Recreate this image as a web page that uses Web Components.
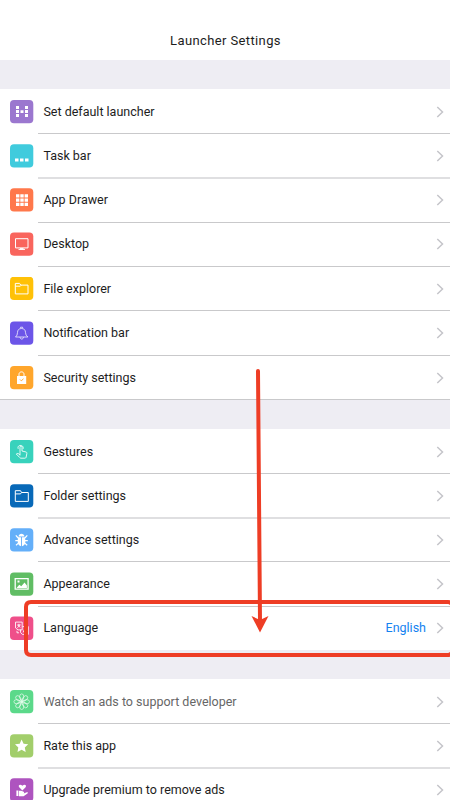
<!DOCTYPE html>
<html lang="en"><head><meta charset="utf-8"><title>Launcher Settings</title>
<style>body{margin:0;background:#fff;font-family:Roboto,sans-serif;overflow:hidden}</style></head><body>
<launcher-settings></launcher-settings>
<script>
const icons={
home:['#9b77cf','<g fill="#fff"><path d="M6 6h3v3H6zM6 10h3v3H6zM6 14h3v3H6zM15 6h3v3h-3zM15 10h3v3h-3zM15 14h3v3h-3zM10.5 10.3h3v2.6h-3z"/></g>'],
task:['#40cbdd','<path fill="#fff" d="M5 14.3h3.5v3H5zM10 14.3h3.5v3H10zM15 14.3h3.5v3H15z"/>'],
grid:['#ff784b','<path fill="#fff" d="M6 6h3.4v3.2H6zM10.3 6h3.4v3.2h-3.4zM14.6 6H18v3.2h-3.4zM6 10.2h3.4v3.2H6zM10.3 10.2h3.4v3.2h-3.4zM14.6 10.2H18v3.2h-3.4zM6 14.4h3.4v3.2H6zM10.3 14.4h3.4v3.2h-3.4zM14.6 14.4H18v3.2h-3.4z"/>'],
desk:['#f9655d','<path d="M5.5 6.3h12.5v9.2h-12.5zM8.5 17h6.5"/><path stroke-width="1.6" d="M10 16.5h3.5"/>'],
file:['#ffc107','<path d="M5.3 17.2V6.7h4.3l1.2 1.7h7.2v8.8zM5.3 9.5h5l1-1.1"/>'],
bell:['#6c55e8','<g opacity=".72"><path d="M5.5 15.5q2-1.5 2-4.5c0-2.4 1.4-4 4-4s4 1.6 4 4q0 3 2.4 4.5zM10.6 6.5v-.8h2v.8M10 15.7c.3 2.5 3.2 2.5 3.5 0"/></g>'],
lock:['#ffa62c','<path d="M9 10V8.2c0-3.1 5-3.1 5 0V10"/><path fill="#fff" stroke="none" d="M7 10h9.2v8H7z"/><path stroke="#ffa62c" d="m10 13.5 1.3 1.3 2.2-2"/>'],
hand:['#38d2bc','<path stroke-width=".85" d="M10 15.5V7.3c0-1.5 2-1.5 2 0V11l4 1c.8.3 1 .8.8 1.7l-.7 3.7q-.3.8-1.2.8H11q-.8 0-1.3-.7L6.3 14c1-1 2.1-.6 3.7.8M8.2 8.8c-1.5-4.4 5.8-4.7 5 0"/>'],
folder:['#0869b8','<path d="M5.3 17.2V6.5h5.2l1 1.8h6.8v8.9zM5.3 9.7h5.2l1-1.4"/>'],
bug:['#64aff9','<path fill="#fff" stroke="none" d="M8.5 8.2c.5-3.6 5.5-3.6 6 0zM8 9h3.1v9C8.6 17.4 7.7 15.6 7.7 13zM12 9h3l.4 4c0 2.6-1 4.4-3.4 5z"/><path d="m5.8 7 2.4 2.7M17.3 7l-2.4 2.7M5.3 12.4h3M17.8 12.4h-3M6 17l2.4-2.2M17.2 17l-2.4-2.2" stroke-width="1.2"/>'],
image:['#60bd64','<path stroke-width="1.3" d="M5.2 6.3h12.9v10.5H5.2z"/><path fill="#fff" stroke="none" d="m6.5 15.5 2.8-3.2 2 1.5 3.2-3.6 2.4 3v2.3zM7.5 8.2h2v2h-2z"/>'],
lang:['#ef4f8a','<path stroke-width=".85" d="M5.5 5.5h6.7v7.8H8l-2.5-2zM12.5 10h5.8v7.8h-6l-1.8-2V13M7.2 8.4h3.3M8.9 7.2v1.2m-1.6 2.8 3-2.8m-2.4 0 2.3 2.5M13.2 15.8l1.7-4 1.7 4m-2.8-1.3h2.2M7 14.2v2h2"/>'],
flower:['#5bd98a',Array.from({length:8},(_,i)=>`<ellipse transform="rotate(${i*45} 11.7 11.7)" cx="11.7" cy="6.8" rx="2.1" ry="2.9" stroke-width=".6"/>`).join('')+'<circle cx="11.7" cy="11.7" r="1.4" fill="#dfffe8" stroke-width=".5"/>'],
star:['#a2ce6b','<path fill="#fff" stroke="none" d="m11.6 5.2 2 4.3 4.6.6-3.4 3.2.9 4.6-4.1-2.3-4.1 2.3.8-4.6-3.3-3.2 4.7-.6z"/>'],
heart:['#ae54bf','<path fill="#fff" stroke="none" d="M12.4 12.2 9.2 9c-1.5-1.7.8-3.7 3.2-1.5C14.8 5.3 17 7.3 15.6 9zM6.4 12.3h2v5.4h-2zM9 12.5h2.2l2.5 1.1c.9.4.6 1.4-.2 1.4h-2l2.8.1 2.5-1c1-.3 1.5.5.7 1.1L13.6 18H9z"/>']};
class Icon extends HTMLElement{connectedCallback(){const n=this.getAttribute('name'),[c,p]=icons[n],dy=this.getAttribute('shift')||0;this.attachShadow({mode:'open'}).innerHTML=`<style>:host{display:block;width:24px;height:24px}svg{display:block}</style><svg width="24" height="24" viewBox="0 0 24 24" fill="none" stroke="${/home|task|grid/.test(n)?'none':'#fff'}"><g transform="translate(0 ${dy})"><rect width="23.3" height="23.3" rx="4" fill="${c}" stroke="none"/>${p}</g></svg>`}}
customElements.define('setting-icon',Icon);
class Row extends HTMLElement{connectedCallback(){const a=n=>this.getAttribute(n);this.attachShadow({mode:'open'}).innerHTML=`<style>:host{display:flex;box-sizing:border-box;height:${a('h')||44}px;padding:${a('pad')||11}px 6px 0 10px;align-items:flex-start;color:#1d1d1d;background:linear-gradient(#c9c9cb,#c9c9cb) 38px 0/100% 1px no-repeat}:host([first]){background:none}:host([soft]){background:linear-gradient(#dfdfe1,#dfdfe1) 38px 0/100% 2px no-repeat}:host([muted]){color:#666}
.l{margin-left:9.4px;flex:1;font-size:12.5px;line-height:23px;white-space:nowrap}.v{font-size:12.5px;line-height:23px;color:#1482f0;margin-right:10px}.c{width:8px;height:12px;margin-top:6px;display:block}</style><setting-icon name="${a('icon')}" shift="${a('shift')||0}"></setting-icon><span class="l"><slot></slot></span>${a('value')?`<span class="v">${a('value')}</span>`:''}<svg class="c" viewBox="0 0 8 12" fill="none" stroke="#c5c5ca" stroke-width="1.5"><path d="m1.3 1 5.2 5-5.2 5"/></svg>`}}
customElements.define('setting-row',Row);
class Group extends HTMLElement{connectedCallback(){this.attachShadow({mode:'open'}).innerHTML='<style>:host{display:block;background:#fff}:host([line]){box-shadow:0 1px #c9c9cb}</style><slot></slot>'}}
customElements.define('setting-group',Group);
class App extends HTMLElement{connectedCallback(){this.attachShadow({mode:'open'}).innerHTML=`<style>:host{display:flex;flex-direction:column;position:relative;width:450px;height:800px;overflow:hidden;background:#eeedf3;gap:29px}
header{height:60px;flex:none;box-sizing:border-box;padding:31px 0 0 1px;text-align:center;background:#fff;color:#1d1d1d;font-size:13px;line-height:20px;letter-spacing:.38px}setting-group{flex:none}#g1{margin-bottom:1px}
.mark{position:absolute;inset:0;width:450px;height:800px}</style>
<header>Launcher Settings</header>
<setting-group line id="g1"><setting-row first icon="home">Set default launcher</setting-row><setting-row shift=".3" icon="task">Task bar</setting-row><setting-row soft shift=".3" h="45" icon="grid">App Drawer</setting-row><setting-row pad="10" shift=".4" icon="desk">Desktop</setting-row><setting-row shift="-.3" icon="file">File explorer</setting-row><setting-row shift=".5" h="45" icon="bell">Notification bar</setting-row><setting-row icon="lock">Security settings</setting-row></setting-group>
<setting-group><setting-row first icon="hand">Gestures</setting-row><setting-row shift=".2" icon="folder">Folder settings</setting-row><setting-row soft shift=".3" icon="bug">Advance settings</setting-row><setting-row shift=".4" h="45" icon="image">Appearance</setting-row><setting-row pad="10" shift=".6" icon="lang" value="English">Language</setting-row></setting-group>
<setting-group><setting-row first muted icon="flower">Watch an ads to support developer</setting-row><setting-row shift=".2" icon="star">Rate this app</setting-row><setting-row soft shift=".2" icon="heart">Upgrade premium to remove ads</setting-row></setting-group>
<svg class="mark" fill="none" stroke="#ee3d25" stroke-width="4"><path d="M448 602H31q-5 0-5 5v43q0 5 5 5H448M448 602q2 0 4 2M448 655q2 0 4-2"/><path stroke-linecap="round" d="M258 371 260 621"/><path fill="#ee3d25" stroke="none" d="m251.5 616 8.5 4 8.5-4-8.5 16.5z"/></svg>`}}
customElements.define('launcher-settings',App);
</script></body></html>
